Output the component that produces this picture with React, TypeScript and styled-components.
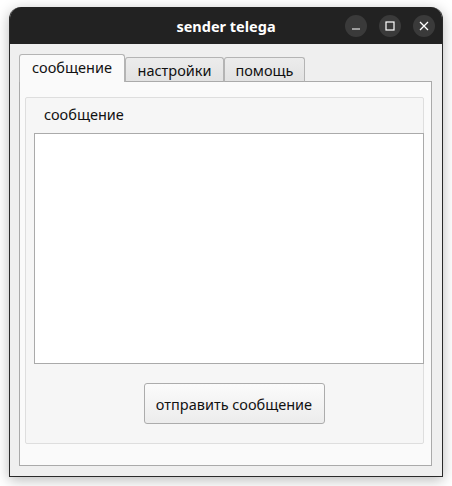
import React from "react";
import styled, { createGlobalStyle } from "styled-components";

const Global = createGlobalStyle`
  html, body { margin: 0; padding: 0; background: #ffffff; }
  body { font-family: "Noto Sans", "Open Sans", sans-serif; }
  * { box-sizing: border-box; }
`;

const Page = styled.div`
  padding: 7px 9px 0 9px;
  width: 452px;
  height: 486px;
`;

const Window = styled.div`
  width: 434px;
  height: 470px;
  display: flex;
  flex-direction: column;
  border: 1px solid #2a2a2a;
  border-top: none;
  border-radius: 12px 12px 0 0;
  background: #efefef;
  box-shadow: 0 3px 14px rgba(0, 0, 0, 0.28);
  overflow: hidden;
`;

const TitleBar = styled.div`
  height: 37px;
  flex: none;
  background: #222222;
  display: flex;
  align-items: center;
  justify-content: center;
  position: relative;
`;

const Title = styled.div`
  color: #ffffff;
  font-weight: 700;
  font-size: 14.5px;
  font-family: "Noto Sans", "Open Sans", sans-serif;
`;

const Controls = styled.div`
  position: absolute;
  right: 7px;
  top: 8px;
  display: flex;
  gap: 12px;
`;

const CtlBtn = styled.div`
  width: 22px;
  height: 22px;
  border-radius: 50%;
  background: #3a3a3a;
  display: flex;
  align-items: center;
  justify-content: center;
`;

const Body = styled.div`
  flex: 1;
  padding: 10px 10px 11px 9px;
  display: flex;
  flex-direction: column;
`;

const TabRow = styled.div`
  display: flex;
  align-items: flex-end;
  height: 28px;
  position: relative;
  z-index: 1;
  margin-bottom: -1px;
`;

const Tab = styled.div<{ $active?: boolean; $w: number }>`
  width: ${(p) => p.$w}px;
  height: ${(p) => (p.$active ? 28 : 25)}px;
  border: 1px solid #b4b4b4;
  border-bottom: ${(p) => (p.$active ? "none" : "1px solid #aaaaaa")};
  border-radius: 3px 3px 0 0;
  background: ${(p) =>
    p.$active ? "#fafafa" : "linear-gradient(#ececec, #e2e2e2)"};
  font-size: 14.5px;
  color: #111;
  display: flex;
  align-items: center;
  justify-content: center;
  padding-bottom: ${(p) => (p.$active ? 3 : 0)}px;
`;

const Frame = styled.div`
  flex: 1;
  border: 1px solid #aaaaaa;
  background: #fafafa;
  padding: 15px 7px 21px 5px;
  display: flex;
  flex-direction: column;
`;

const Group = styled.div`
  flex: 1;
  border: 1px solid #dedede;
  border-radius: 2px;
  background: #f6f6f6;
  display: flex;
  flex-direction: column;
  padding: 0 0 19px 8px;
`;

const GroupTitle = styled.div`
  height: 35px;
  display: flex;
  align-items: center;
  padding: 0 0 3px 10px;
  font-size: 14.5px;
  color: #111;
`;

const TextArea = styled.div`
  height: 231px;
  margin-right: -1px;
  background: #ffffff;
  border: 1px solid #aaaaaa;
`;

const ButtonRow = styled.div`
  display: flex;
  justify-content: center;
  margin-top: 19px;
  padding-left: 11px;
`;

const Button = styled.div`
  width: 181px;
  height: 41px;
  border: 1px solid #acacac;
  border-radius: 3px;
  background: linear-gradient(#fbfbfb, #ececec);
  display: flex;
  align-items: center;
  justify-content: center;
  font-size: 14.5px;
  color: #111;
`;

export default function App() {
  return (
    <Page>
      <Global />
      <Window>
        <TitleBar>
          <Title>sender telega</Title>
          <Controls>
            <CtlBtn>
              <svg width="10" height="10" viewBox="0 0 10 10">
                <line x1="1" y1="8" x2="9" y2="8" stroke="#fff" strokeWidth="1.2" />
              </svg>
            </CtlBtn>
            <CtlBtn>
              <svg width="10" height="10" viewBox="0 0 10 10">
                <rect x="1" y="1" width="8" height="8" fill="none" stroke="#fff" strokeWidth="1.2" />
              </svg>
            </CtlBtn>
            <CtlBtn>
              <svg width="10" height="10" viewBox="0 0 10 10">
                <path d="M1 1 L9 9 M9 1 L1 9" stroke="#fff" strokeWidth="1.3" />
              </svg>
            </CtlBtn>
          </Controls>
        </TitleBar>
        <Body>
          <TabRow>
            <Tab $active $w={106}>сообщение</Tab>
            <Tab $w={99}>настройки</Tab>
            <Tab $w={81}>помощь</Tab>
          </TabRow>
          <Frame>
            <Group>
              <GroupTitle>сообщение</GroupTitle>
              <TextArea />
              <ButtonRow>
                <Button>отправить сообщение</Button>
              </ButtonRow>
            </Group>
          </Frame>
        </Body>
      </Window>
    </Page>
  );
}
